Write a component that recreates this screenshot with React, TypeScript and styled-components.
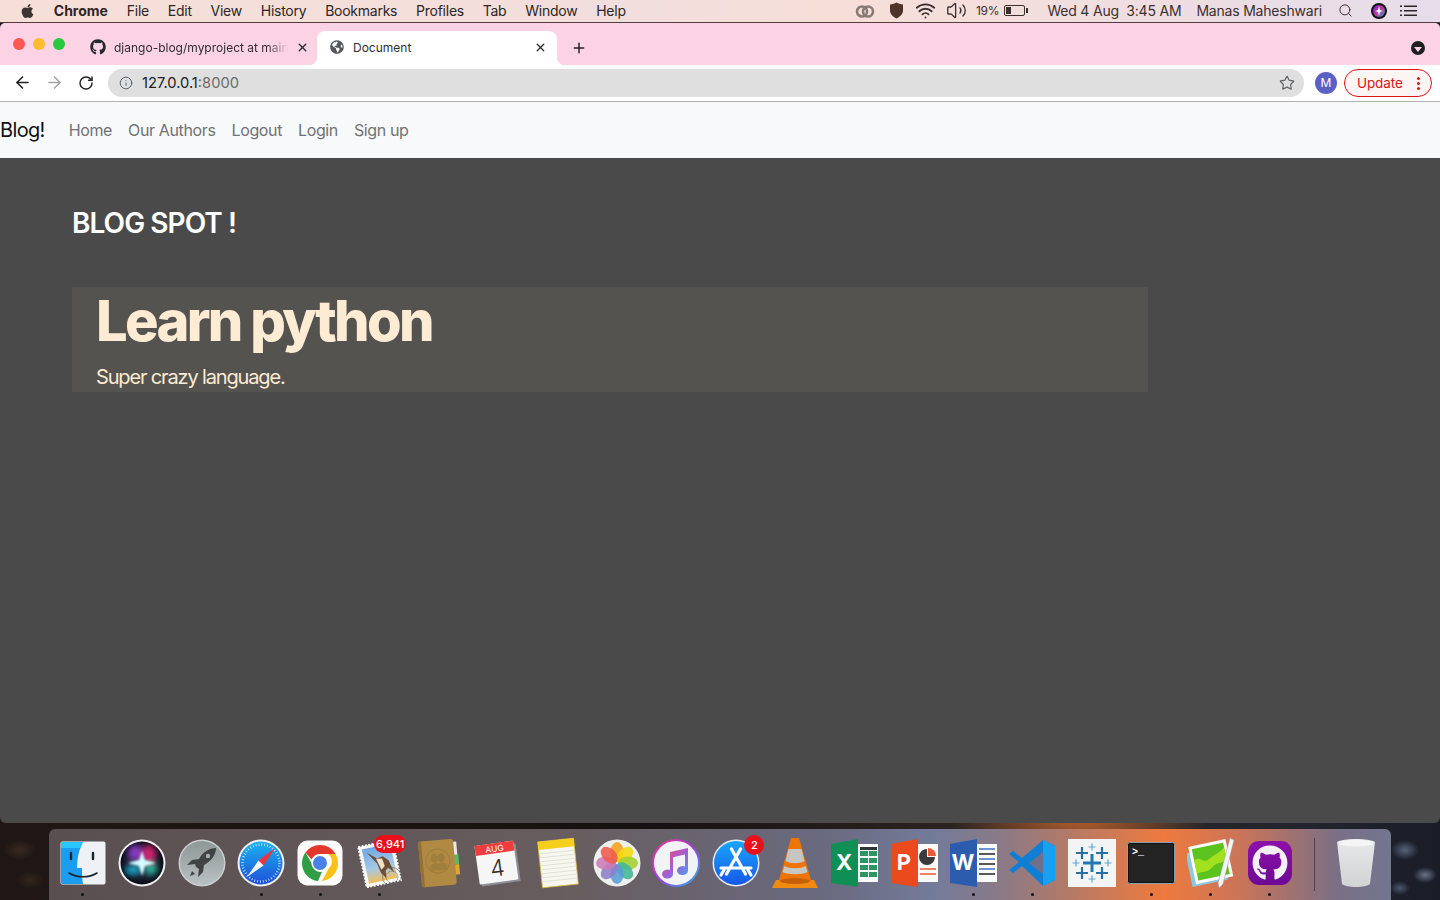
import React from 'react';
import styled, { createGlobalStyle } from 'styled-components';
import { ArrowLeft, ArrowRight, Info, Plus, RotateCw, Search, Star, Volume2, Wifi, X } from 'lucide-react';
import { FaApple, FaGithub, FaGlobeAmericas } from 'react-icons/fa';

const GlobalStyle = createGlobalStyle`
  html, body {
    margin: 0;
    padding: 0;
    overflow: hidden;
    background: #1c1513;
  }
  * { box-sizing: border-box; }
`;

const Screen = styled.div`
  width: 1440px;
  height: 900px;
  overflow: hidden;
  display: flex;
  flex-direction: column;
  font-family: Inter, "Liberation Sans", sans-serif;
  background:
    radial-gradient(ellipse 14px 10px at 1405px 850px, #59627a 0%, rgba(89, 98, 122, 0) 100%),
    radial-gradient(ellipse 12px 8px at 1425px 875px, #6a7288 0%, rgba(106, 114, 136, 0) 100%),
    radial-gradient(ellipse 10px 7px at 1400px 888px, #4d566e 0%, rgba(77, 86, 110, 0) 100%),
    radial-gradient(ellipse 16px 10px at 20px 850px, #3a2a24 0%, rgba(58, 42, 36, 0) 100%),
    radial-gradient(ellipse 14px 9px at 30px 880px, #33251f 0%, rgba(51, 37, 31, 0) 100%),
    radial-gradient(ellipse 130px 60px at 1080px 815px, #b8602c 0%, rgba(184, 96, 44, 0) 100%),
    linear-gradient(90deg, #201714 0%, #171211 45%, #2a2320 65%, #23252e 90%, #191d28 100%);
`;

const MenuBar = styled.div`
  height: 23px;
  flex: none;
  display: flex;
  align-items: center;
  justify-content: space-between;
  background: linear-gradient(90deg, #f6dfd7 0%, #f2dedd 45%, #f7dfd8 60%, #e6dcea 100%);
  border-bottom: 1px solid #553c3c;
  color: #2e2626;
  font-size: 14px;
  padding: 0 23px 1px 20px;
`;

const MenuGroup = styled.div`
  display: flex;
  align-items: center;
  gap: 18.8px;
`;

const MenuItem = styled.span<{ $bold?: boolean }>`
  font-weight: ${({ $bold }) => ($bold ? 700 : 400)};
  white-space: nowrap;
  letter-spacing: ${({ $bold }) => ($bold ? '0' : '-0.25px')};
`;

const AppleMark = styled(FaApple)`
  width: 15px;
  height: 16px;
  color: #3c3333;
`;

const StatusGroup = styled.div`
  display: flex;
  align-items: center;
`;

const StatusSlot = styled.span<{ $left: number; $size?: number }>`
  display: flex;
  align-items: center;
  margin-left: ${({ $left }) => $left}px;
  font-size: ${({ $size }) => $size ?? 14}px;
  letter-spacing: -0.2px;
  white-space: nowrap;
  color: #3c2f2f;
`;

const Battery = styled.span`
  position: relative;
  display: block;
  width: 21px;
  height: 11px;
  border: 1px solid #3c2f2f;
  border-radius: 2px;
  &::before {
    content: '';
    position: absolute;
    left: 1px;
    top: 1px;
    bottom: 1px;
    width: 5px;
    background: #3c2f2f;
  }
  &::after {
    content: '';
    position: absolute;
    right: -4px;
    top: 2px;
    width: 2px;
    height: 5px;
    background: #3c2f2f;
  }
`;

const Window = styled.div`
  flex: none;
  height: 800px;
  display: flex;
  flex-direction: column;
  border-radius: 5px 5px 6px 6px;
  overflow: hidden;
`;

const TabStrip = styled.div`
  height: 42px;
  flex: none;
  display: flex;
  align-items: flex-end;
  background: #fcd2e5;
  padding-left: 13px;
  padding-right: 15px;
`;

const Lights = styled.div`
  align-self: flex-start;
  display: flex;
  gap: 8px;
  margin-top: 15px;
  width: 71px;
`;

const Light = styled.span<{ $color: string }>`
  width: 12px;
  height: 12px;
  border-radius: 50%;
  background: ${({ $color }) => $color};
`;

const Tab = styled.div`
  position: relative;
  width: 240px;
  height: 34px;
  display: flex;
  align-items: center;
  padding: 0 10px 2px 13px;
  gap: 9px;
  font-size: 12px;
  color: #2f2f33;
  background: #ffffff;
  border-radius: 8px 8px 0 0;
  &::before,
  &::after {
    content: '';
    position: absolute;
    bottom: 0;
    width: 8px;
    height: 8px;
  }
  &::before {
    left: -8px;
    background: radial-gradient(circle at 0 0, transparent 8px, #ffffff 8.5px);
  }
  &::after {
    right: -8px;
    background: radial-gradient(circle at 100% 0, transparent 8px, #ffffff 8.5px);
  }
`;

const InactiveTab = styled.div`
  width: 233px;
  height: 34px;
  display: flex;
  align-items: center;
  padding: 0 8px 2px 6px;
  gap: 8px;
  font-size: 12px;
  color: #2f2f33;
`;

const TabTitle = styled.span<{ $fade?: boolean }>`
  flex: 1;
  overflow: hidden;
  white-space: nowrap;
  ${({ $fade }) =>
    $fade &&
    `
    -webkit-mask-image: linear-gradient(90deg, #000 88%, transparent 100%);
    mask-image: linear-gradient(90deg, #000 88%, transparent 100%);
  `}
`;

const NewTab = styled(Plus)`
  margin: 0 0 9px 14px;
  color: #222;
`;

const ProfileMenu = styled.span`
  margin: 0 0 10px auto;
  width: 14px;
  height: 14px;
  border-radius: 50%;
  background: #1f1f22;
  display: flex;
  align-items: center;
  justify-content: center;
  &::after {
    content: '';
    margin-top: 2px;
    border-left: 4px solid transparent;
    border-right: 4px solid transparent;
    border-top: 5px solid #fcd2e5;
  }
`;

const Toolbar = styled.div`
  height: 37px;
  flex: none;
  display: flex;
  align-items: center;
  background: #ffffff;
  border-bottom: 1px solid #b2b2b2;
  padding: 0 8px 1px 12px;
`;

const NavButton = styled.span`
  width: 20px;
  display: flex;
  justify-content: center;
  margin-right: 12px;
`;

const Omnibox = styled.div`
  flex: 1;
  height: 28px;
  border-radius: 14px;
  background: #dfdfdf;
  display: flex;
  align-items: center;
  padding: 0 9px 0 11px;
  font-size: 14.7px;
  color: #6b6b6b;
`;

const Host = styled.span`
  color: #202124;
  margin-left: 9px;
`;

const StarIcon = styled(Star)`
  margin-left: auto;
  color: #5f6368;
`;

const Avatar = styled.span`
  width: 22px;
  height: 22px;
  margin-left: 11px;
  border-radius: 50%;
  background: #5b60c4;
  color: #fff;
  font-size: 12px;
  display: flex;
  align-items: center;
  justify-content: center;
`;

const UpdateButton = styled.span`
  width: 88px;
  height: 28px;
  margin-left: 7px;
  border: 1px solid #dc1414;
  border-radius: 14px;
  background: #fdf4f4;
  color: #d91515;
  font-size: 13.5px;
  letter-spacing: -0.1px;
  display: flex;
  align-items: center;
  padding-left: 12px;
  position: relative;
`;

const Kebab = styled.span`
  position: absolute;
  right: 11px;
  top: 7px;
  width: 3px;
  height: 3px;
  border-radius: 50%;
  background: #d91515;
  box-shadow: 0 5px 0 #d91515, 0 10px 0 #d91515;
`;

const Navbar = styled.nav`
  height: 56px;
  flex: none;
  display: flex;
  align-items: center;
  background: #f8f9fa;
`;

const Brand = styled.span`
  font-size: 20px;
  color: #111;
  letter-spacing: -0.65px;
  margin-right: 24px;
`;

const NavLink = styled.span`
  font-size: 16px;
  color: #6f7174;
  letter-spacing: -0.37px;
  margin-right: 16px;
`;

const Main = styled.main`
  flex: 1;
  background: #4a4a4a;
  padding: 48px 0 0 72px;
`;

const SiteTitle = styled.h2`
  margin: 0 0 47px;
  font-size: 28px;
  line-height: 34px;
  font-weight: 600;
  color: #ffffff;
  letter-spacing: -0.95px;
`;

const Jumbotron = styled.section`
  width: 1076px;
  height: 105px;
  background: #545350;
  padding: 0 24px;
  color: #fdebd3;
`;

const Heading = styled.h1`
  margin: 0;
  font-size: 56px;
  line-height: 68px;
  font-weight: 800;
  letter-spacing: -2.7px;
`;

const Lead = styled.p`
  margin: 10px 0 0;
  font-size: 20px;
  line-height: 24px;
  font-weight: 400;
  letter-spacing: -1.15px;
`;

const DockArea = styled.footer`
  flex: 1;
  padding: 6px 49px 0;
`;

const Dock = styled.div`
  height: 71px;
  display: flex;
  padding: 7px 0 0 4.3px;
  border-radius: 6px 6px 0 0;
  background: linear-gradient(
    90deg,
    #5a4f50 0%,
    #685d5e 38%,
    #6a6a80 58%,
    #747b9a 66%,
    #8a7a86 71%,
    #ee7a3e 83%,
    #c9745a 89%,
    #7a7086 96%,
    #72768f 100%
  );
`;

const DockItem = styled.div`
  position: relative;
  width: 59.35px;
  height: 54px;
  flex: none;
  display: flex;
  align-items: center;
  justify-content: center;
`;

const RunDot = styled.span`
  position: absolute;
  bottom: -6px;
  left: 50%;
  margin-left: -1.5px;
  width: 3px;
  height: 3px;
  border-radius: 50%;
  background: #111;
`;

const Badge = styled.span<{ $wide?: boolean }>`
  position: absolute;
  top: -1px;
  right: ${({ $wide }) => ($wide ? '3px' : '1px')};
  height: ${({ $wide }) => ($wide ? '18px' : '20px')};
  min-width: 20px;
  padding: 0 ${({ $wide }) => ($wide ? '2px' : '0')};
  border-radius: 10px;
  background: #e8101a;
  color: #fff;
  font-size: 11px;
  font-weight: 500;
  display: flex;
  align-items: center;
  justify-content: center;
`;

const DockDivider = styled.span`
  flex: none;
  width: 1px;
  height: 53px;
  margin: 2px 18px 0 14px;
  background: #4b4450;
`;

const TrashItem = styled(DockItem)`
  width: 46px;
`;

const GithubTile = styled.div`
  width: 44px;
  height: 44px;
  border-radius: 11px;
  background: linear-gradient(#8d10aa, #6e0a94);
  color: #f4f0f6;
  display: flex;
  align-items: center;
  justify-content: center;
`;

const Finder = () => (
  <svg width="46" height="44" viewBox="0 0 46 44">
    <rect x="0.5" y="0.5" width="45" height="43" rx="2" fill="#eef2f7" />
    <path d="M2 1h21c-4 8-6 16-6 26h5c0 6 0 11 1 16H2a2 2 0 0 1-1-2V3a2 2 0 0 1 1-2z" fill="#1b9df2" />
    <path d="M2 1h21c-1 2-2 4-3 6H1V3z" fill="#29c6fb" />
    <path d="M11 12v6M33 12v6" stroke="#19232e" strokeWidth="2.4" strokeLinecap="round" />
    <path d="M9 32c8 5 20 5 28 0" stroke="#19232e" strokeWidth="1.6" fill="none" strokeLinecap="round" />
  </svg>
);

const Siri = () => (
  <svg width="48" height="48" viewBox="0 0 48 48">
    <defs>
      <radialGradient id="siriBase" cx="50%" cy="50%" r="50%">
        <stop offset="0%" stopColor="#3a3f5c" />
        <stop offset="100%" stopColor="#0b0b16" />
      </radialGradient>
      <filter id="soft" x="-40%" y="-40%" width="180%" height="180%"><feGaussianBlur stdDeviation="3" /></filter>
      <filter id="softer" x="-40%" y="-40%" width="180%" height="180%"><feGaussianBlur stdDeviation="1.1" /></filter>
      <clipPath id="siriClip"><circle cx="24" cy="24" r="21.500" /></clipPath>
    </defs>
    <circle cx="24" cy="24" r="23.5" fill="#f1f1f4" />
    <circle cx="24" cy="24" r="21.5" fill="url(#siriBase)" />
    <g clipPath="url(#siriClip)">
      <g filter="url(#soft)">
        <ellipse cx="17" cy="14" rx="7" ry="8" fill="#8a3bc3" />
        <ellipse cx="31" cy="15" rx="7" ry="9" fill="#d4226f" />
        <ellipse cx="15" cy="31" rx="8" ry="5" fill="#15a5c6" />
        <ellipse cx="33" cy="30" rx="6" ry="6" fill="#27b9a0" />
      </g>
      <path d="M24 12l3 9 11 3-11 3-3 10-3-10-11-3 11-3z" fill="#d4fbff" filter="url(#softer)" />
    </g>
  </svg>
);

const Launchpad = () => (
  <svg width="48" height="48" viewBox="0 0 48 48">
    <defs>
      <linearGradient id="padFill" x1="0" y1="0" x2="0" y2="1">
        <stop offset="0%" stopColor="#8f9696" />
        <stop offset="100%" stopColor="#b9c1c2" />
      </linearGradient>
    </defs>
    <circle cx="24" cy="24" r="23.5" fill="#c9cfd0" />
    <circle cx="24" cy="24" r="22" fill="url(#padFill)" />
    <path d="M38 9c-7 0-13 4-17 11l-7 1-5 5 8-1 1 3 3 2-1 8 5-5 1-7c7-4 12-10 12-17z" fill="#3f4344" />
    <circle cx="30" cy="17" r="2.2" fill="#a8b0b1" />
    <path d="M14 32l-2 5 5-2z" fill="#3f4344" />
  </svg>
);

const Safari = () => (
  <svg width="48" height="48" viewBox="0 0 48 48">
    <defs>
      <linearGradient id="safBlue" x1="0" y1="0" x2="0" y2="1">
        <stop offset="0%" stopColor="#19b3f2" />
        <stop offset="100%" stopColor="#1f4fd8" />
      </linearGradient>
    </defs>
    <circle cx="24" cy="24" r="23.5" fill="#eef0f2" />
    <circle cx="24" cy="24" r="21.5" fill="url(#safBlue)" />
    <circle cx="24" cy="24" r="18.5" fill="none" stroke="#dceaff" strokeWidth="2.4" strokeDasharray="0.8 2.1" />
    <path d="M38 9L26.5 26.5 21.5 21.5z" fill="#f0333b" />
    <path d="M10 38l11.5-16.5 5 5z" fill="#f4f4f4" />
  </svg>
);

const Chrome = () => (
  <svg width="46" height="46" viewBox="0 0 46 46">
    <rect x="0.5" y="0.5" width="45" height="45" rx="10" fill="#fbfbfb" />
    <path d="M23 5a18 18 0 0 1 15.6 9H23a9 9 0 0 0-8.4 5.6L8.4 12.6A18 18 0 0 1 23 5z" fill="#e3362c" />
    <path d="M38.6 14A18 18 0 0 1 25 41l7-13a9 9 0 0 0-1-14z" fill="#fbc216" />
    <path d="M8.4 12.6l6.4 11A9 9 0 0 0 25 31.8L21 41A18 18 0 0 1 8.4 12.6z" fill="#2f9e44" />
    <circle cx="23" cy="23" r="8.6" fill="#fff" />
    <circle cx="23" cy="23" r="7" fill="#4a80ea" />
  </svg>
);

const Mail = () => (
  <svg width="46" height="50" viewBox="0 0 46 50">
    <defs>
      <linearGradient id="stampSky" x1="0" y1="0" x2="0" y2="1">
        <stop offset="0%" stopColor="#6fa9e4" />
        <stop offset="60%" stopColor="#a3c9e6" />
        <stop offset="100%" stopColor="#f0bf5e" />
      </linearGradient>
    </defs>
    <g transform="rotate(-12 23 25)">
      <rect x="5" y="5" width="35" height="41" fill="#f7f7f7" stroke="#fff" strokeWidth="2" strokeDasharray="2 1.4" />
      <rect x="8" y="8" width="29" height="35" fill="url(#stampSky)" />
      <path d="M12 12l9 8 6-1 5 5 3 13-5-6-3 2-1 8-4-6-2-10z" fill="#6e4c33" />
      <path d="M20 20l6 1 1 8-4 3z" fill="#efe0c6" />
    </g>
    <circle cx="35" cy="39" r="9.5" fill="none" stroke="#5b5b66" strokeWidth="1" opacity=".6" />
    <circle cx="35" cy="39" r="6" fill="none" stroke="#5b5b66" strokeWidth="1" opacity=".45" />
  </svg>
);

const Contacts = () => (
  <svg width="46" height="54" viewBox="0 0 46 54">
    <g transform="rotate(-5 23 27)">
      <rect x="34" y="7" width="8" height="14" fill="#e8e8e8" />
      <rect x="36" y="20" width="7" height="10" fill="#5eb95e" />
      <rect x="36" y="30" width="7" height="10" fill="#e0a62e" />
      <rect x="4" y="4" width="35" height="46" rx="3" fill="#b08a42" />
      <rect x="4" y="4" width="3" height="46" rx="1.5" fill="#96702f" />
      <circle cx="22" cy="25" r="12" fill="none" stroke="#a07e3c" strokeWidth="1.2" />
      <ellipse cx="18.500" cy="22" rx="3.600" ry="4.600" fill="#a07e3c" />
      <ellipse cx="25.500" cy="22" rx="3.600" ry="4.600" fill="#a07e3c" />
      <path d="M12.500 34c0-5 3-7 6-7s6 2 6 7zM20.500 34c0-5 2-7 5-7s6 2 6 7z" fill="#a07e3c" />
    </g>
  </svg>
);

const CalendarIcon = () => (
  <svg width="48" height="50" viewBox="0 0 48 50">
    <g transform="rotate(-8 24 25)">
      <rect x="5" y="8" width="39" height="38" fill="#8d9097" />
      <rect x="3" y="5" width="39" height="39" rx="1" fill="#f6f6f6" />
      <rect x="3" y="5" width="39" height="10" fill="#f03b3f" />
      <text x="22.5" y="13.5" textAnchor="middle" fontSize="8.5" fill="#fff" fontFamily="Inter, sans-serif">AUG</text>
      <text x="22.5" y="38" textAnchor="middle" fontSize="23" fill="#2c2c2c" fontFamily="Inter, sans-serif" fontWeight="300">4</text>
    </g>
  </svg>
);

const Notes = () => (
  <svg width="46" height="52" viewBox="0 0 46 52">
    <g transform="rotate(-6 23 26)">
      <rect x="5" y="3" width="36" height="46" fill="#f7f6ef" stroke="#d9b93a" strokeWidth=".8" />
      <rect x="5" y="3" width="36" height="8" fill="#f6cf1a" />
      {[15, 19, 23, 27, 31, 35, 39, 43].map((y) => (
        <path key={y} d={`M5 ${y}h36`} stroke="#dcdcd6" strokeWidth=".8" />
      ))}
    </g>
  </svg>
);

const Photos = () => {
  const petals = ['#f6a21b', '#f4d90f', '#a4cf30', '#42b795', '#5a9bd8', '#8d7fc8', '#cc7ab8', '#ef5a4d'];
  return (
    <svg width="48" height="48" viewBox="0 0 48 48">
      <circle cx="24" cy="24" r="23.5" fill="#eef0ee" />
      {petals.map((c, i) => (
        <ellipse key={c} cx="24" cy="13" rx="6.6" ry="10" fill={c} opacity=".88" transform={`rotate(${i * 45} 24 24)`} />
      ))}
    </svg>
  );
};

const Music = () => (
  <svg width="48" height="48" viewBox="0 0 48 48">
    <defs>
      <linearGradient id="ring" x1="0" y1="0" x2="1" y2="1">
        <stop offset="0%" stopColor="#f3348e" />
        <stop offset="50%" stopColor="#a13ddb" />
        <stop offset="100%" stopColor="#1fb8f0" />
      </linearGradient>
      <linearGradient id="note" x1="0" y1="0" x2="1" y2="1">
        <stop offset="0%" stopColor="#f4466e" />
        <stop offset="55%" stopColor="#a05fd8" />
        <stop offset="100%" stopColor="#3fa8f0" />
      </linearGradient>
    </defs>
    <circle cx="24" cy="24" r="23" fill="#f2f3f6" stroke="url(#ring)" strokeWidth="2" />
    <path
      d="M18 13l18-4v22.500a5.500 4.500 0 1 1-3-3.900V15.500l-12 2.700V35a5.500 4.500 0 1 1-3-3.900z"
      fill="url(#note)"
    />
  </svg>
);

const AppStore = () => (
  <svg width="48" height="48" viewBox="0 0 48 48">
    <defs>
      <linearGradient id="storeBlue" x1="0" y1="0" x2="0" y2="1">
        <stop offset="0%" stopColor="#18a6fb" />
        <stop offset="100%" stopColor="#1657e8" />
      </linearGradient>
    </defs>
    <circle cx="24" cy="24" r="23.5" fill="#e9edf2" />
    <circle cx="24" cy="24" r="22" fill="url(#storeBlue)" />
    <path
      d="M19.500 10l14 25M28.500 10l-14 25M9 29h30M36 31l3 5M12 31l-3 5"
      stroke="#fff"
      strokeWidth="3.2"
      strokeLinecap="round"
      fill="none"
    />
  </svg>
);

const Vlc = () => (
  <svg width="48" height="54" viewBox="0 0 48 54">
    <path d="M5 44h38l4 8H1z" fill="#f08a10" />
    <path d="M20 2h8l12 42c-6 5-26 5-32 0z" fill="#ee7406" />
    <path d="M17.500 13h13l3 12c-5 3-14 3-19 0z" fill="#c6c6c2" />
    <path d="M13.500 30c5 3 16 3 21 0l2 6c-5 3-20 3-25 0z" fill="#c6c6c2" />
    <ellipse cx="24" cy="45" rx="15" ry="3" fill="#c75f08" />
  </svg>
);

const Office = ({ tile, mark, doc }: { tile: string; mark: string; doc: React.ReactNode }) => (
  <svg width="50" height="50" viewBox="0 0 50 50">
    <rect x="26" y="6" width="23" height="38" fill="#fafafa" />
    {doc}
    <path d="M2 6l27-5v48L2 45z" fill={tile} />
    <text x="15" y="32" textAnchor="middle" fontSize="22" fontWeight="700" fill="#fff" fontFamily="Inter, sans-serif">
      {mark}
    </text>
  </svg>
);

const ExcelGrid = () => (
  <g fill="#2b9564">
    <rect x="31" y="9" width="17" height="3" fill="#333" />
    {[13, 20, 27, 34].flatMap((y) =>
      [31, 40].map((x) => <rect key={`${x}-${y}`} x={x} y={y} width="8" height="5" />),
    )}
  </g>
);

const PowerpointDoc = () => (
  <g>
    <path d="M38 11a8 8 0 1 0 8 8h-8z" fill="#3a3a3a" />
    <path d="M39 10v8h8a8 8 0 0 0-8-8z" fill="#ee5a35" />
    <path d="M31 31h16M31 36h16" stroke="#ee5a35" strokeWidth="1.4" />
  </g>
);

const WordDoc = () => (
  <g strokeWidth="1.6">
    {[11, 16, 21, 26, 31, 36].map((y, i) => (
      <path key={y} d={`M31 ${y}h16`} stroke={i % 2 ? '#2f2f2f' : '#4a7bc4'} />
    ))}
  </g>
);

const VsCode = () => (
  <svg width="48" height="48" viewBox="0 0 48 48">
    <path d="M35 1l12 6v34l-12 6-21-20-9 7-4-3 10-8L1 15l4-3 9 7z" fill="#0f7fd6" />
    <path d="M35 1l12 6v34l-12 6z" fill="#16a1f2" />
    <path d="M35 13L21 24l14 11z" fill="#6f7089" />
  </svg>
);

const Tableau = () => {
  const cross = (x: number, y: number, r: number, c: string, w: number) => (
    <path key={`${x}-${y}`} d={`M${x - r} ${y}h${r * 2}M${x} ${y - r}v${r * 2}`} stroke={c} strokeWidth={w} />
  );
  return (
    <svg width="48" height="48" viewBox="0 0 48 48">
      <rect width="48" height="48" fill="#f3f4f4" />
      {cross(24, 24, 9, '#1f77b4', 3)}
      {cross(14, 14, 6, '#2a6f9e', 2.2)}
      {cross(34, 14, 6, '#2a6f9e', 2.2)}
      {cross(14, 34, 6, '#2a6f9e', 2.2)}
      {cross(34, 34, 6, '#2a6f9e', 2.2)}
      {cross(24, 8, 3.5, '#5fa8d3', 1.2)}
      {cross(24, 40, 3.5, '#5fa8d3', 1.2)}
      {cross(8, 24, 3.5, '#5fa8d3', 1.2)}
      {cross(40, 24, 3.5, '#5fa8d3', 1.2)}
    </svg>
  );
};

const Terminal = () => (
  <svg width="48" height="42" viewBox="0 0 48 42">
    <rect x="0.5" y="0.5" width="47" height="41" rx="2" fill="#111" stroke="#86a3ae" />
    <rect x="2" y="2" width="44" height="38" fill="#232323" />
    <text x="5" y="13" fontSize="10" fill="#fff" fontFamily="'Liberation Mono', monospace" fontWeight="700">
      &gt;_
    </text>
  </svg>
);

const Coda = () => (
  <svg width="48" height="52" viewBox="0 0 48 52">
    <g transform="rotate(-12 22 26)">
      <rect x="1" y="12" width="36" height="34" fill="#8cc9dc" />
      <rect x="5" y="6" width="38" height="38" fill="#fafafa" />
      <rect x="8" y="9" width="32" height="32" fill="#5cc21d" />
      <path d="M8 20c8-3 7 6 15 2s8-2 17-8v12c-8 4-9 0-16 5s-9 1-16 3z" fill="#a3e01f" />
    </g>
    <path d="M43 1l4 2-11 44-4 4-1-5z" fill="#f4f4f4" stroke="#999" strokeWidth=".5" />
  </svg>
);

const Trash = () => (
  <svg width="40" height="50" viewBox="0 0 40 50">
    <defs>
      <linearGradient id="bin" x1="0" y1="0" x2="0" y2="1">
        <stop offset="0%" stopColor="#e8e9ea" />
        <stop offset="100%" stopColor="#d0d2d4" />
      </linearGradient>
    </defs>
    <path d="M1 4c6-4 32-4 38 0l-5 42c-4 4-24 4-28 0z" fill="url(#bin)" />
    <ellipse cx="20" cy="5" rx="17" ry="3.6" fill="#f4f4f4" />
  </svg>
);

const apps: { key: string; icon: React.ReactNode; dot?: boolean; badge?: string }[] = [
  { key: 'finder', icon: <Finder />, dot: true },
  { key: 'siri', icon: <Siri /> },
  { key: 'launchpad', icon: <Launchpad /> },
  { key: 'safari', icon: <Safari />, dot: true },
  { key: 'chrome', icon: <Chrome />, dot: true },
  { key: 'mail', icon: <Mail />, dot: true, badge: '6,941' },
  { key: 'contacts', icon: <Contacts /> },
  { key: 'calendar', icon: <CalendarIcon /> },
  { key: 'notes', icon: <Notes /> },
  { key: 'photos', icon: <Photos /> },
  { key: 'music', icon: <Music /> },
  { key: 'store', icon: <AppStore />, badge: '2' },
  { key: 'vlc', icon: <Vlc /> },
  { key: 'excel', icon: <Office tile="#0f8f55" mark="X" doc={<ExcelGrid />} /> },
  { key: 'powerpoint', icon: <Office tile="#ea4a1c" mark="P" doc={<PowerpointDoc />} /> },
  { key: 'word', icon: <Office tile="#2b5cad" mark="W" doc={<WordDoc />} />, dot: true },
  { key: 'vscode', icon: <VsCode />, dot: true },
  { key: 'tableau', icon: <Tableau /> },
  { key: 'terminal', icon: <Terminal />, dot: true },
  { key: 'coda', icon: <Coda />, dot: true },
  { key: 'github', icon: <GithubTile><FaGithub size={36} /></GithubTile>, dot: true },
];

const menus = ['File', 'Edit', 'View', 'History', 'Bookmarks', 'Profiles', 'Tab', 'Window', 'Help'];
const links = ['Home', 'Our Authors', 'Logout', 'Login', 'Sign up'];

export default function App() {
  return (
    <Screen>
      <GlobalStyle />
      <MenuBar>
        <MenuGroup>
          <AppleMark />
          <MenuItem $bold>Chrome</MenuItem>
          {menus.map((m) => (
            <MenuItem key={m}>{m}</MenuItem>
          ))}
        </MenuGroup>
        <StatusGroup>
          <StatusSlot $left={0}>
            <svg width="20" height="14" viewBox="0 0 20 14">
              <circle cx="7" cy="7.500" r="5" fill="none" stroke="#8a7a76" strokeWidth="2.6" />
              <circle cx="13" cy="7.500" r="5" fill="none" stroke="#8a7a76" strokeWidth="2.6" />
            </svg>
          </StatusSlot>
          <StatusSlot $left={14}>
            <svg width="15" height="17" viewBox="0 0 15 17">
              <path d="M7.500 0.500c2 1.200 4 1.800 6.500 2v6c0 3.500-2.800 6.200-6.500 8C3.800 14.700 1 12 1 8.500v-6c2.500-.2 4.500-.8 6.500-2z" fill="#4e3329" />
            </svg>
          </StatusSlot>
          <StatusSlot $left={11}><Wifi size={21} strokeWidth={2.1} /></StatusSlot>
          <StatusSlot $left={10}><Volume2 size={21} strokeWidth={1.5} /></StatusSlot>
          <StatusSlot $left={9} $size={12}>19%</StatusSlot>
          <StatusSlot $left={5}><Battery /></StatusSlot>
          <StatusSlot $left={22}>Wed 4 Aug&nbsp;&nbsp;3:45 AM</StatusSlot>
          <StatusSlot $left={15}>Manas Maheshwari</StatusSlot>
          <StatusSlot $left={16}><Search size={15} strokeWidth={1.6} /></StatusSlot>
          <StatusSlot $left={18}>
            <svg width="16" height="16" viewBox="0 0 16 16">
              <defs>
                <linearGradient id="menuSiri" x1="0" y1="0" x2="1" y2="1">
                  <stop offset="0%" stopColor="#5a2bd0" />
                  <stop offset="50%" stopColor="#d0309a" />
                  <stop offset="100%" stopColor="#14a6c8" />
                </linearGradient>
              </defs>
              <circle cx="8" cy="8" r="8" fill="#111" />
              <circle cx="8" cy="8" r="6" fill="url(#menuSiri)" />
              <path d="M8 3l1 4 3 1-3 1-1 4-1-4-3-1 3-1z" fill="#dff" />
            </svg>
          </StatusSlot>
          <StatusSlot $left={13}>
            <svg width="17" height="12" viewBox="0 0 17 12" fill="#2e2626">
              <rect y="0.500" width="2" height="1.500" />
              <rect x="4" y="0.500" width="13" height="1.500" />
              <rect y="5" width="2" height="1.500" />
              <rect x="4" y="5" width="13" height="1.500" />
              <rect y="9.500" width="2" height="1.500" />
              <rect x="4" y="9.500" width="13" height="1.500" />
            </svg>
          </StatusSlot>
        </StatusGroup>
      </MenuBar>

      <Window>
        <TabStrip>
          <Lights>
            <Light $color="#fc5753" />
            <Light $color="#fdbc2e" />
            <Light $color="#27c93f" />
          </Lights>
          <InactiveTab>
            <FaGithub size={16} color="#24292e" />
            <TabTitle $fade>django-blog/myproject at main</TabTitle>
            <X size={13} strokeWidth={2.5} />
          </InactiveTab>
          <Tab>
            <FaGlobeAmericas size={14} color="#55585e" />
            <TabTitle>Document</TabTitle>
            <X size={13} strokeWidth={2.5} />
          </Tab>
          <NewTab size={16} strokeWidth={2.2} />
          <ProfileMenu />
        </TabStrip>
        <Toolbar>
          <NavButton><ArrowLeft size={19} strokeWidth={2} color="#222" /></NavButton>
          <NavButton><ArrowRight size={19} strokeWidth={2} color="#a3a3a3" /></NavButton>
          <NavButton><RotateCw size={16} strokeWidth={2.2} color="#222" /></NavButton>
          <Omnibox>
            <Info size={14} strokeWidth={1.7} color="#5f6368" />
            <Host>127.0.0.1</Host>:8000
            <StarIcon size={16} strokeWidth={1.8} />
          </Omnibox>
          <Avatar>M</Avatar>
          <UpdateButton>
            Update
            <Kebab />
          </UpdateButton>
        </Toolbar>
        <Navbar>
          <Brand>Blog!</Brand>
          {links.map((l) => (
            <NavLink key={l}>{l}</NavLink>
          ))}
        </Navbar>
        <Main>
          <SiteTitle>BLOG SPOT !</SiteTitle>
          <Jumbotron>
            <Heading>Learn python</Heading>
            <Lead>Super crazy language.</Lead>
          </Jumbotron>
        </Main>
      </Window>

      <DockArea>
        <Dock>
          {apps.map((a) => (
            <DockItem key={a.key}>
              {a.icon}
              {a.badge && <Badge $wide={a.badge.length > 1}>{a.badge}</Badge>}
              {a.dot && <RunDot />}
            </DockItem>
          ))}
          <DockDivider />
          <TrashItem>
            <Trash />
          </TrashItem>
        </Dock>
      </DockArea>
    </Screen>
  );
}
